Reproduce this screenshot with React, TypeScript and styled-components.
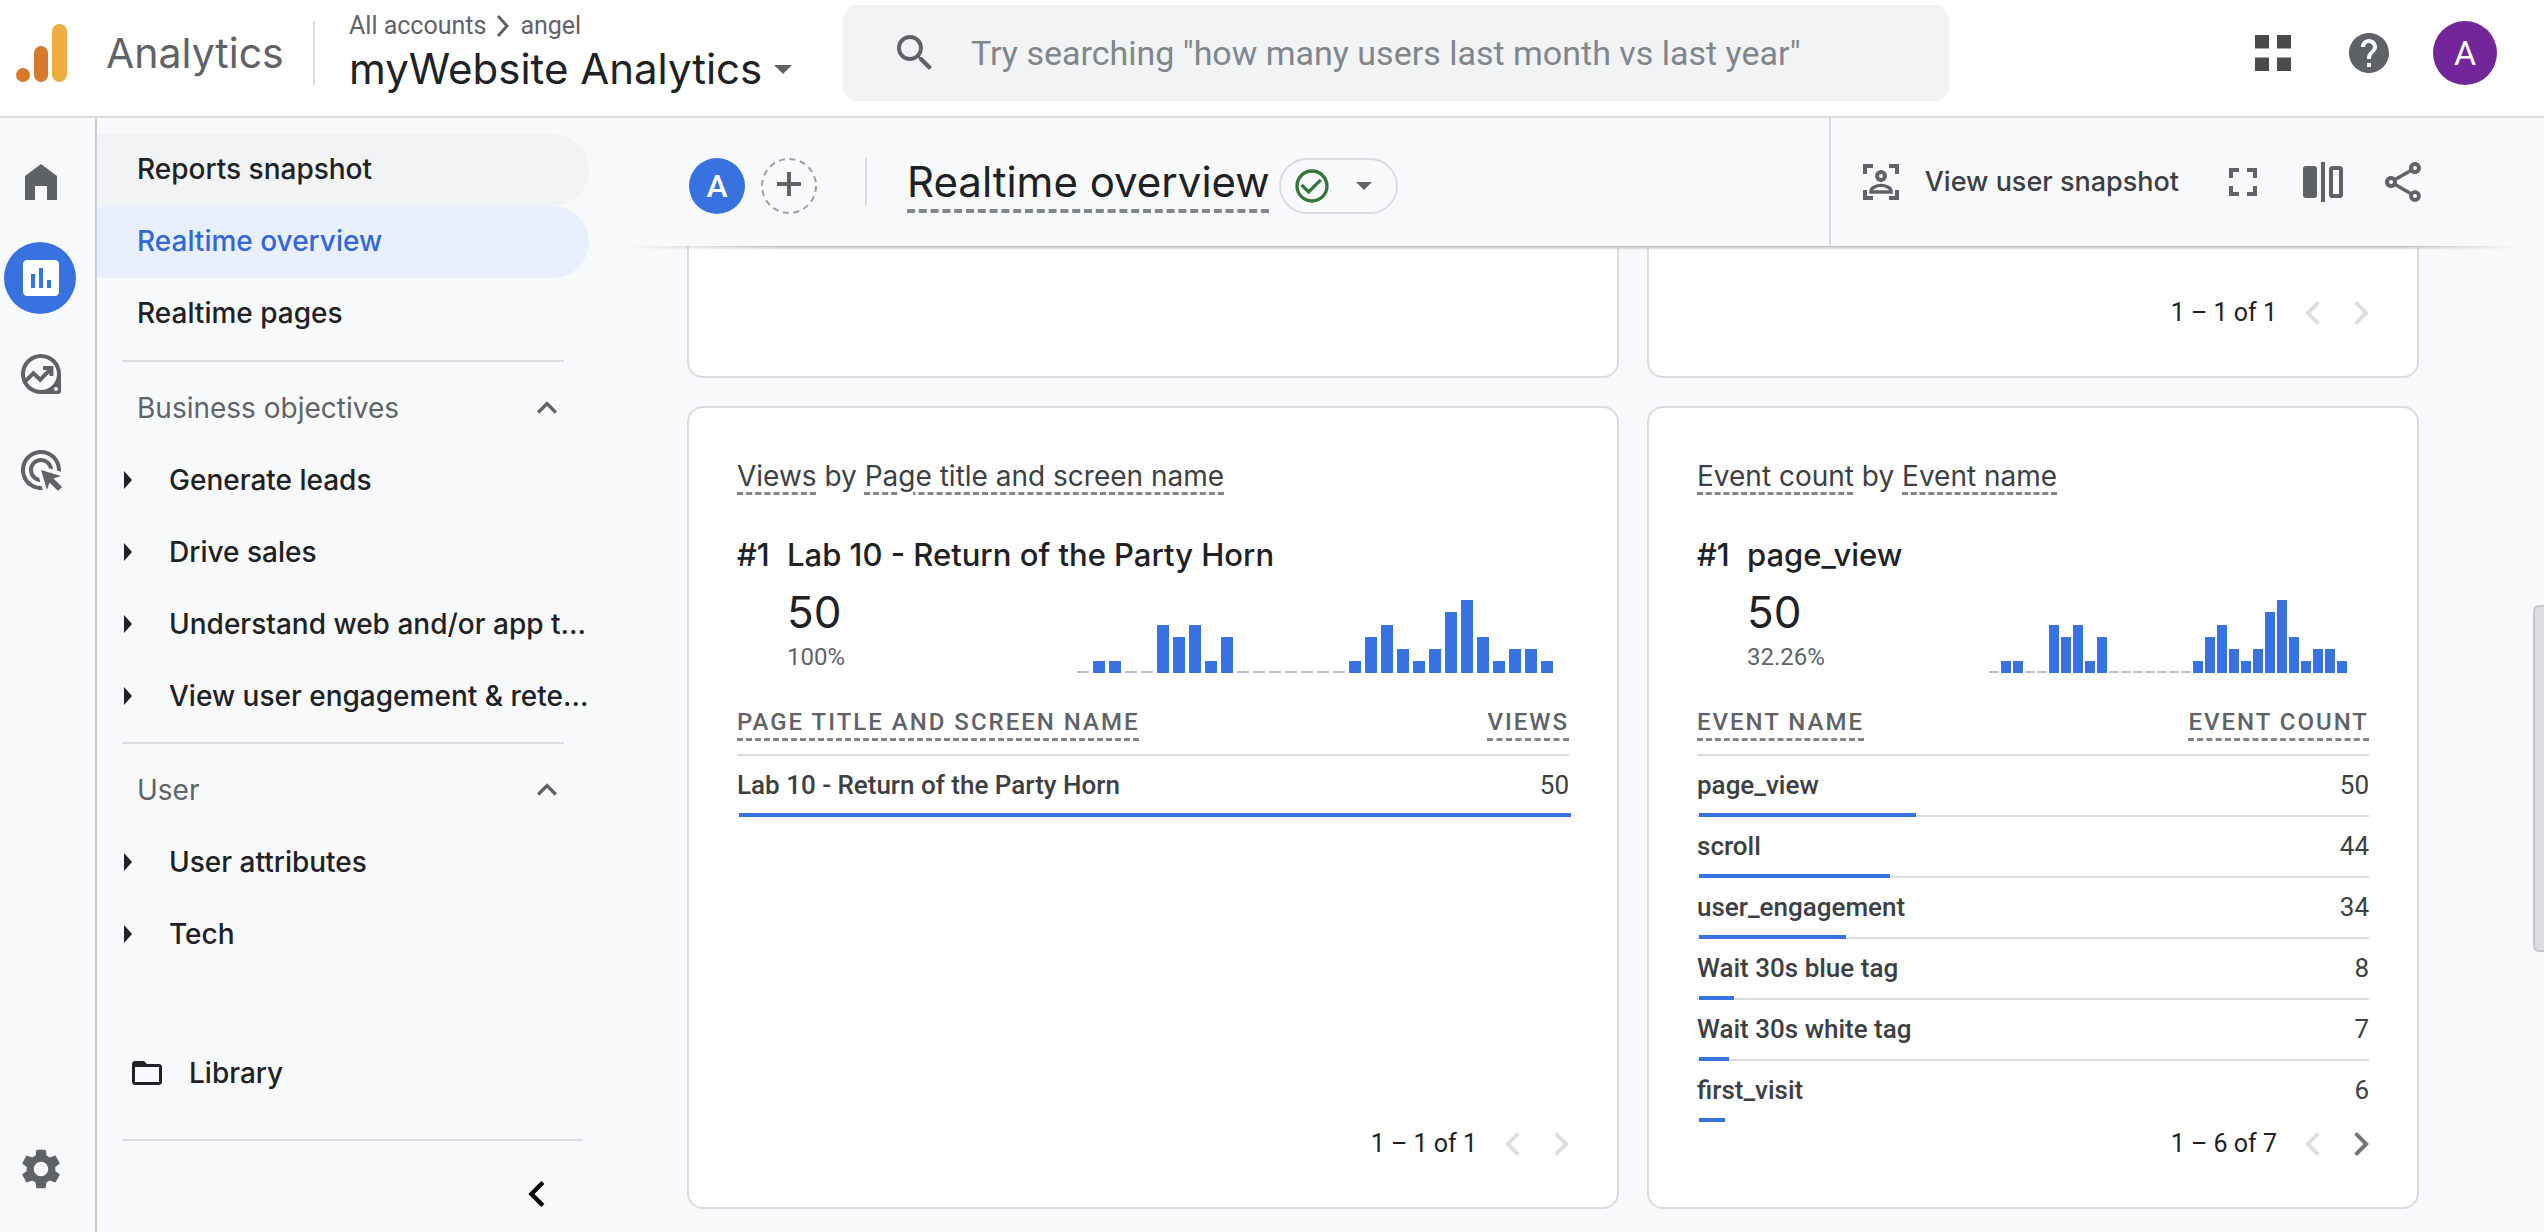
import React from "react";
import styled, { createGlobalStyle, css } from "styled-components";
import {
  MdAdsClick,
  MdAssessment,
  MdCheckCircleOutline,
  MdChevronLeft,
  MdChevronRight,
  MdExpandLess,
  MdFolderOpen,
  MdFullscreen,
  MdHelp,
  MdOutlineShare,
  MdSearch,
  MdSettings,
} from "react-icons/md";

const color = {
  ink: "#202124",
  text: "#3c4043",
  muted: "#5f6368",
  hint: "#80868b",
  line: "#dadce0",
  page: "#f8f9fb",
  blue: "#3871e0",
};

const display = `Inter, Roboto, sans-serif`;
const body = `Roboto, "Liberation Sans", sans-serif`;

const GlobalStyle = createGlobalStyle`
  *, *::before, *::after { box-sizing: border-box; }
  body { margin: 0; background: ${color.page}; color: ${color.ink}; font-family: ${body}; }
  h1, h2, h3, p, ul { margin: 0; padding: 0; font-weight: inherit; }
  ul { list-style: none; }
  a { color: inherit; text-decoration: none; }
  button { border: 0; padding: 0; background: none; font: inherit; color: inherit; cursor: pointer; }
  svg { display: block; flex: none; }
`;

const Page = styled.div`
  display: grid;
  grid-template-rows: auto 1fr;
  min-height: 100vh;
  position: relative;
`;

/* ---------- header ---------- */

const Header = styled.header`
  display: grid;
  grid-template-columns: 313px 530px minmax(0, 1106px) 1fr;
  align-items: center;
  padding: 5px 47px 15px 0;
  background: #fff;
  border-bottom: 2px solid ${color.line};
`;

const Brand = styled.a`
  display: flex;
  align-items: center;
  height: 64px;
  padding-left: 15px;
  gap: 38px;
  font: 400 41px/64px ${display};
  color: ${color.muted};
`;

const Account = styled.div`
  display: flex;
  flex-direction: column;
  padding-left: 36px;
  position: relative;

  &::before {
    content: "";
    position: absolute;
    left: 0;
    top: 11px;
    width: 2px;
    height: 64px;
    background: ${color.line};
  }
`;

const Crumbs = styled.nav`
  display: flex;
  align-items: center;
  gap: 10px;
  font: 400 25px/32px ${body};
  color: ${color.muted};
`;

const PropertyButton = styled.button`
  display: flex;
  align-items: center;
  gap: 12px;
  font: 400 42px/54px ${display};
  color: ${color.ink};
  white-space: nowrap;
`;

const Search = styled.label`
  display: flex;
  align-items: center;
  gap: 30px;
  height: 96px;
  padding: 0 48px;
  border-radius: 14px;
  background: #f1f3f4;
  color: ${color.muted};
`;

const SearchInput = styled.input`
  flex: 1;
  min-width: 0;
  border: 0;
  outline: 0;
  background: none;
  font: 400 34px/44px ${body};
  color: ${color.ink};
  &::placeholder { color: ${color.hint}; opacity: 1; }
`;

const HeaderTools = styled.div`
  display: flex;
  justify-content: flex-end;
  align-items: center;
  gap: 40px;
`;

const IconButton = styled.button<{ $tint?: string; $size?: number }>`
  display: grid;
  place-items: center;
  width: ${(p) => p.$size ?? 48}px;
  height: ${(p) => p.$size ?? 48}px;
  color: ${(p) => p.$tint ?? color.muted};
`;

const Profile = styled.button`
  width: 64px;
  height: 64px;
  border-radius: 50%;
  background: #722699;
  color: #fff;
  font: 400 34px/64px ${body};
`;

/* ---------- shell ---------- */

const Shell = styled.div`
  display: grid;
  grid-template-columns: 97px 492px minmax(0, 1fr);
`;

const Rail = styled.nav`
  display: flex;
  flex-direction: column;
  gap: 24px;
  padding: 28px 0 27px 4px;
  border-right: 2px solid #cdcfd2;
`;

const RailLink = styled.a<{ $active?: boolean; $last?: boolean }>`
  display: grid;
  place-items: center;
  width: 72px;
  height: 72px;
  padding-left: 2px;
  border-radius: 50%;
  color: ${(p) => (p.$active ? "#fff" : color.muted)};
  background: ${(p) => (p.$active ? color.blue : "transparent")};
  margin-top: ${(p) => (p.$last ? "auto" : 0)};
`;

const Nav = styled.nav`
  display: flex;
  flex-direction: column;
  padding-top: 16px;
  font: 500 28px/70px ${display};
`;

const NavLink = styled.a<{ $state?: "hover" | "active" }>`
  display: block;
  height: 72px;
  padding-left: 40px;
  border-radius: 4px 36px 36px 4px;
  ${(p) => p.$state === "hover" && css`background: #f1f3f4;`}
  ${(p) => p.$state === "active" && css`background: #e8f0fe; color: #3367d6;`}
`;

const NavRule = styled.hr<{ $wide?: boolean }>`
  height: 2px;
  width: auto;
  border: 0;
  margin: ${(p) => (p.$wide ? "30px 6px 27px 26px" : "10px 25px")};
  background: ${color.line};
`;

const GroupButton = styled.button`
  display: flex;
  width: 100%;
  justify-content: space-between;
  align-items: center;
  height: 72px;
  padding: 0 22px 0 40px;
  font-weight: 400;
  color: ${color.muted};
`;

const TreeButton = styled.button`
  display: flex;
  align-items: center;
  gap: 37px;
  width: 100%;
  height: 72px;
  padding: 0 0 0 27px;
  text-align: left;
  white-space: nowrap;
`;

const LibraryLink = styled.a`
  display: flex;
  align-items: center;
  gap: 24px;
  height: 72px;
  margin-top: auto;
  padding-left: 32px;
`;

const Collapse = styled(IconButton)`
  align-self: flex-end;
  margin: 0 26px 12px 0;
`;

/* ---------- report toolbar ---------- */

const Main = styled.main`
  display: flex;
  flex-direction: column;
`;

const Toolbar = styled.div`
  display: flex;
  justify-content: space-between;
  height: 128px;
  padding-left: 100px;
  position: relative;

  &::after {
    content: "";
    position: absolute;
    left: 36px;
    right: 24px;
    top: 100%;
    height: 4px;
    background: linear-gradient(#b9babc, rgba(185, 186, 188, 0));
    mask-image: linear-gradient(to right, transparent, #000 8%, #000 94%, transparent);
  }
`;

const TitleGroup = styled.div`
  display: flex;
  align-items: center;
  padding-top: 8px;
  gap: 16px;
`;

const Segment = styled.button`
  width: 56px;
  height: 56px;
  border-radius: 50%;
  background: ${color.blue};
  color: #fff;
  font: 500 32px/56px ${body};
`;

const TitleRule = styled.span`
  width: 2px;
  height: 48px;
  margin: 0 24px 8px 32px;
  background: ${color.line};
`;

const dashed = css`
  text-decoration-line: underline;
  text-decoration-style: dashed;
  text-decoration-color: ${color.hint};
`;

const Title = styled.h1`
  font: 400 42px/56px ${display};
  padding-bottom: 8px;
  white-space: nowrap;
  ${dashed}
  text-decoration-thickness: 4px;
  text-underline-offset: 12px;
`;

const StatusChip = styled.button`
  display: flex;
  align-items: center;
  gap: 24px;
  height: 56px;
  margin-left: -7px;
  padding: 0 24px 0 11px;
  border: 2px solid ${color.line};
  border-radius: 28px;
  color: ${color.muted};
`;

const Actions = styled.div`
  display: flex;
  align-items: center;
  justify-content: flex-end;
  gap: 32px;
  padding: 0 117px 0 26px;
  border-left: 2px solid ${color.line};
`;

const SnapshotButton = styled.button`
  display: flex;
  align-items: center;
  gap: 20px;
  margin-right: 8px;
  font: 500 27px/48px ${display};
  color: ${color.text};
  white-space: nowrap;
  svg { color: ${color.muted}; }
`;

/* ---------- cards ---------- */

const Board = styled.div`
  display: grid;
  grid-template-columns: 932fr 772fr;
  gap: 28px;
  padding: 0 125px 20px 98px;
`;

const Card = styled.section<{ $clipped?: boolean }>`
  display: flex;
  flex-direction: column;
  justify-content: flex-end;
  background: #fff;
  border: 2px solid ${color.line};
  border-radius: 16px;
  padding: 46px 0 41px;
  ${(p) =>
    p.$clipped &&
    css`
      border-top: 0;
      border-radius: 0 0 16px 16px;
      padding-top: 0;
      min-height: 132px;
    `}
`;

const CardBody = styled.div`
  flex: 1;
  padding: 0 48px;
`;

const CardTitle = styled.h2`
  font: 400 28px/44px ${display};
  color: ${color.text};
`;

const Term = styled.span`
  ${dashed}
  text-decoration-thickness: 3px;
  text-underline-offset: 6px;
`;

const Leader = styled.div`
  display: grid;
  grid-template-columns: 50px minmax(0, 1fr);
  margin: 33px 0 4px;
  font: 500 31px/48px ${display};
`;

const Summary = styled.div<{ $inset: number }>`
  display: flex;
  justify-content: space-between;
  align-items: flex-end;
  padding: 0 ${(p) => p.$inset}px 8px 50px;
`;

const Big = styled.p`
  font: 400 44px/58px ${display};
`;

const Share = styled.p`
  font: 400 24px/32px ${body};
  color: ${color.muted};
`;

const Table = styled.table`
  width: 100%;
  margin-top: 19px;
  border-collapse: separate;
  border-spacing: 0;
  font: 400 26px/36px ${body};
  color: ${color.text};

  tr { position: relative; }
  th, td { padding: 0; text-align: left; border-bottom: 2px solid ${color.line}; }
  th:last-child, td:last-child { text-align: right; }
  tbody tr:last-child > * { border-bottom-color: transparent; }
  thead th {
    height: 56px;
    padding-bottom: 14px;
    vertical-align: bottom;
    font: 500 24px/36px ${body};
    letter-spacing: 2px;
    text-transform: uppercase;
    color: ${color.muted};
  }
  thead ${Term} { text-underline-offset: 8px; }
  tbody th, tbody td { height: 61px; padding-bottom: 2px; }
  tbody th { font-weight: 500; }
`;

const Meter = styled.span`
  position: absolute;
  left: 2px;
  bottom: 0;
  height: 4px;
  background: ${color.blue};
`;

const Pager = styled.div`
  display: flex;
  justify-content: flex-end;
  align-items: center;
  height: 44px;
  padding-right: 32px;
  font: 400 25px/44px ${body};

  span { margin-right: 12px; }
`;

const ScrollThumb = styled.div`
  position: absolute;
  right: 0;
  top: 49.1%;
  width: 11px;
  height: 28.2%;
  border: 2px solid #c5c7ca;
  border-right: 0;
  border-radius: 6px 0 0 6px;
  background: ${color.line};
`;

/* ---------- drawings ---------- */

const Logo = () => (
  <svg width="53" height="60" viewBox="0 0 53 60" aria-hidden="true">
    <circle cx="8" cy="52" r="7" fill="#d57a2d" />
    <rect x="19" y="23" width="14" height="36" rx="7" fill="#d57a2d" />
    <rect x="37" y="1" width="15" height="58" rx="7.5" fill="#ecae40" />
  </svg>
);

const Caret = ({ w = 18 }: { w?: number }) => (
  <svg width={w} height={w / 2} viewBox="0 0 10 5" fill={color.muted} aria-hidden="true">
    <path d="M0 0h10L5 5z" />
  </svg>
);

const TreeCaret = () => (
  <svg width="8" height="18" viewBox="0 0 8 18" fill="currentColor" aria-hidden="true">
    <path d="M0 0l8 9-8 9z" />
  </svg>
);

const CrumbArrow = () => (
  <svg width="14" height="22" viewBox="0 0 14 22" fill="none" stroke="currentColor" strokeWidth="3" aria-hidden="true">
    <path d="M2 1l9 10-9 10" />
  </svg>
);

const AppsIcon = () => (
  <svg width="36" height="36" viewBox="0 0 36 36" fill="#4a4a4a" aria-hidden="true">
    <path d="M0 0h14v13.500H0zM22 0h14v13.500H22zM0 22.500h14V36H0zM22 22.500h14V36H22z" />
  </svg>
);

const Icon = ({ children }: { children: React.ReactNode }) => (
  <svg width="48" height="48" viewBox="0 0 24 24" fill="currentColor" aria-hidden="true">
    {children}
  </svg>
);

const HomeIcon = () => (
  <Icon>
    <path d="M4 21V9l8-6 8 6v12h-5v-7H9v7z" />
  </Icon>
);

const ExploreIcon = () => (
  <Icon>
    <path
      fillRule="evenodd"
      d="M12 2a10 10 0 1 0 0 20h8.500a1.500 1.500 0 0 0 1.500-1.500V12A10 10 0 0 0 12 2zm0 18a8 8 0 1 1 0-16 8 8 0 0 1 0 16zm7.500-1.500a1 1 0 1 0 0 2 1 1 0 0 0 0-2z"
    />
    <path d="M3.500 16.300l4.700-4.700 3.400 3.200 5-5M13 9h4.200v4" fill="none" stroke="currentColor" strokeWidth="2" />
  </Icon>
);

const SnapshotIcon = () => (
  <Icon>
    <g fill="none" stroke="currentColor" strokeWidth="2">
      <path d="M4 8V4h4M16 4h4v4M20 16v4h-4M8 20H4v-4" />
      <circle cx="12" cy="9" r="2" />
      <path strokeWidth="1.700" d="M7 17v-.6c0-1.600 2.700-2.700 5-2.700s5 1.100 5 2.700v.6z" />
    </g>
  </Icon>
);

const CompareIcon = () => (
  <Icon>
    <rect x="2" y="4" width="7" height="16" rx="1.500" />
    <rect x="11" y="2" width="2" height="20" />
    <rect x="16" y="5" width="5" height="14" rx="0.800" fill="none" stroke="currentColor" strokeWidth="2" />
  </Icon>
);

const AddIcon = () => (
  <svg width="56" height="56" viewBox="0 0 56 56" fill="none" aria-hidden="true">
    <circle cx="28" cy="28" r="27" stroke="#9aa0a6" strokeWidth="2" strokeDasharray="6 4.600" />
    <path d="M28 14v24M16 26h24" stroke={color.muted} strokeWidth="4" />
  </svg>
);

const perMinute = [0, 1, 1, 0, 0, 4, 3, 4, 1, 3, 0, 0, 0, 0, 0, 0, 0, 1, 3, 4, 2, 1, 2, 5, 6, 3, 1, 2, 2, 1];

const MinuteChart = ({ pitch, bar }: { pitch: number; bar: number }) => {
  const width = pitch * (perMinute.length - 1) + bar;
  return (
    <svg width={width} height="73" viewBox={`0 0 ${width} 73`} role="img" aria-label="Activity per minute">
      {perMinute.map((n, i) => {
        const h = n ? n * 12 + (n > 4 ? 1 : 0) : 2;
        return <rect key={i} x={i * pitch} y={73 - h} width={bar} height={h} fill={n ? color.blue : "#bdc1c6"} />;
      })}
    </svg>
  );
};

/* ---------- composed parts ---------- */

const PagerBar = ({ label, next }: { label: string; next?: boolean }) => (
  <Pager>
    <span>{label}</span>
    <IconButton $tint="#dedede" aria-label="Previous page">
      <MdChevronLeft size={48} />
    </IconButton>
    <IconButton $tint={next ? "#757575" : "#dedede"} aria-label="Next page">
      <MdChevronRight size={48} />
    </IconButton>
  </Pager>
);

type ReportProps = {
  metric: string;
  dimension: string;
  leader: string;
  share: string;
  rows: [string, number][];
  total: number;
  chart: { pitch: number; bar: number; inset: number };
  pager: string;
  next?: boolean;
};

const ReportCard = ({ metric, dimension, leader, share, rows, total, chart, pager, next }: ReportProps) => (
  <Card>
    <CardBody>
      <CardTitle>
        <Term>{metric}</Term> by <Term>{dimension}</Term>
      </CardTitle>
      <Leader>
        <span>#1</span>
        <span>{leader}</span>
      </Leader>
      <Summary $inset={chart.inset}>
        <div>
          <Big>50</Big>
          <Share>{share}</Share>
        </div>
        <MinuteChart pitch={chart.pitch} bar={chart.bar} />
      </Summary>
      <Table>
        <thead>
          <tr>
            <th scope="col"><Term>{dimension}</Term></th>
            <th scope="col"><Term>{metric}</Term></th>
          </tr>
        </thead>
        <tbody>
          {rows.map(([name, value]) => (
            <tr key={name}>
              <th scope="row">
                {name}
                <Meter style={{ width: `${(value / total) * 100}%` }} />
              </th>
              <td>{value}</td>
            </tr>
          ))}
        </tbody>
      </Table>
    </CardBody>
    <PagerBar label={pager} next={next} />
  </Card>
);

const NavGroup = ({ label, items }: { label: string; items: string[] }) => (
  <>
    <NavRule />
    <GroupButton aria-expanded="true">
      {label}
      <MdExpandLess size={40} />
    </GroupButton>
    {items.map((item) => (
      <TreeButton key={item}>
        <TreeCaret />
        <span>{item}</span>
      </TreeButton>
    ))}
  </>
);

const events: [string, number][] = [
  ["page_view", 50],
  ["scroll", 44],
  ["user_engagement", 34],
  ["Wait 30s blue tag", 8],
  ["Wait 30s white tag", 7],
  ["first_visit", 6],
];

export default function App() {
  return (
    <Page>
      <GlobalStyle />
      <Header>
        <Brand href="#">
          <Logo />
          Analytics
        </Brand>
        <Account>
          <Crumbs aria-label="Account">
            <a href="#">All accounts</a>
            <CrumbArrow />
            <a href="#">angel</a>
          </Crumbs>
          <PropertyButton>
            myWebsite Analytics
            <Caret />
          </PropertyButton>
        </Account>
        <Search>
          <MdSearch size={48} />
          <SearchInput
            type="search"
            aria-label="Search"
            placeholder={'Try searching "how many users last month vs last year"'}
          />
        </Search>
        <HeaderTools>
          <IconButton $size={64} aria-label="Apps"><AppsIcon /></IconButton>
          <IconButton aria-label="Help"><MdHelp size={48} /></IconButton>
          <Profile aria-label="Account A">A</Profile>
        </HeaderTools>
      </Header>

      <Shell>
        <Rail aria-label="Sections">
          <RailLink href="#" aria-label="Home"><HomeIcon /></RailLink>
          <RailLink href="#" aria-label="Reports" $active><MdAssessment size={48} /></RailLink>
          <RailLink href="#" aria-label="Explore"><ExploreIcon /></RailLink>
          <RailLink href="#" aria-label="Advertising"><MdAdsClick size={48} /></RailLink>
          <RailLink href="#" aria-label="Admin" $last><MdSettings size={48} /></RailLink>
        </Rail>

        <Nav aria-label="Reports">
          <NavLink href="#" $state="hover">Reports snapshot</NavLink>
          <NavLink href="#" $state="active">Realtime overview</NavLink>
          <NavLink href="#">Realtime pages</NavLink>
          <NavGroup
            label="Business objectives"
            items={["Generate leads", "Drive sales", "Understand web and/or app t...", "View user engagement & rete..."]}
          />
          <NavGroup label="User" items={["User attributes", "Tech"]} />
          <LibraryLink href="#">
            <MdFolderOpen size={36} />
            Library
          </LibraryLink>
          <NavRule $wide />
          <Collapse $tint="#000" $size={52} aria-label="Collapse menu">
            <MdChevronLeft size={52} />
          </Collapse>
        </Nav>

        <Main>
          <Toolbar>
            <TitleGroup>
              <Segment aria-label="Segment A">A</Segment>
              <IconButton $size={56} aria-label="Add comparison"><AddIcon /></IconButton>
              <TitleRule />
              <Title>Realtime overview</Title>
              <StatusChip aria-label="Data quality">
                <MdCheckCircleOutline size={40} color="#34773b" />
                <Caret w={16} />
              </StatusChip>
            </TitleGroup>
            <Actions>
              <SnapshotButton>
                <SnapshotIcon />
                View user snapshot
              </SnapshotButton>
              <IconButton aria-label="Fullscreen"><MdFullscreen size={48} /></IconButton>
              <IconButton aria-label="Compare"><CompareIcon /></IconButton>
              <IconButton aria-label="Share"><MdOutlineShare size={48} /></IconButton>
            </Actions>
          </Toolbar>

          <Board>
            <Card $clipped />
            <Card $clipped>
              <PagerBar label="1 – 1 of 1" />
            </Card>
            <ReportCard
              metric="Views"
              dimension="Page title and screen name"
              leader="Lab 10 - Return of the Party Horn"
              share="100%"
              rows={[["Lab 10 - Return of the Party Horn", 50]]}
              total={50}
              chart={{ pitch: 16, bar: 12, inset: 16 }}
              pager="1 – 1 of 1"
            />
            <ReportCard
              metric="Event count"
              dimension="Event name"
              leader="page_view"
              share="32.26%"
              rows={events}
              total={155}
              chart={{ pitch: 12, bar: 10, inset: 22 }}
              pager="1 – 6 of 7"
              next
            />
          </Board>
        </Main>
      </Shell>
      <ScrollThumb />
    </Page>
  );
}
